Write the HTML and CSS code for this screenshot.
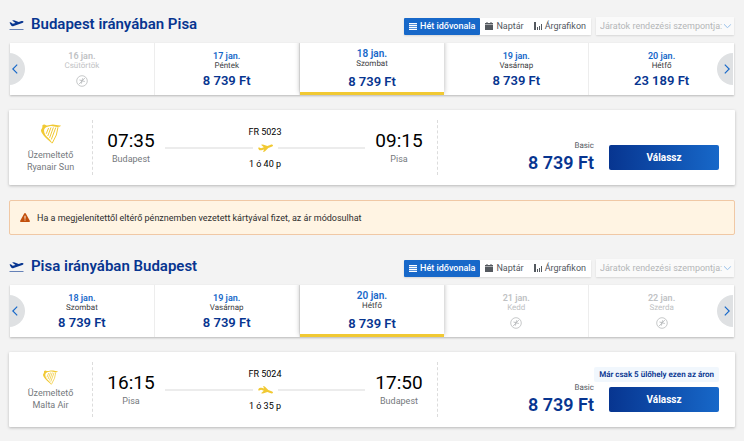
FILE: index.html
```html
<!DOCTYPE html>
<html lang="hu">
<head>
<meta charset="utf-8">
<meta name="viewport" content="width=device-width, initial-scale=1">
<title>Budapest – Pisa</title>
<link rel="stylesheet" href="styles.css">
</head>
<body>
<svg class="sprite" aria-hidden="true">
  <symbol id="depart" viewBox="0 0 14 12">
    <path d="M0 2.600 1.300 2.200 3.200 3.700 6 2.900 2.600.6 4.500.2 9.200 2 12 1.100C13.200.8 14 1.100 14 1.700c0 .5-.4.9-1.200 1.200L4.200 6C3 6.400 2.200 6.200 1.500 5.300Z"/>
    <rect y="9" width="14" height="1" opacity=".6"/>
  </symbol>
  <symbol id="plane" viewBox="0 0 15 8">
    <path d="M0 3.7 1.3 3.4 3.1 4.3 5.8 3.3 3 .8 4.9.4 9.4 2.1 12.2.9C13.6.3 14.7.5 15 1.2c.1.6-.4 1.1-1.4 1.5L10.3 4 6.8 7.5 4.9 8 6.2 5.4 3.5 6.2C2.2 6.6 1.3 6.2.8 5.4Z"/>
  </symbol>
  <symbol id="list" viewBox="0 0 8 8">
    <path d="M0 1h8v1H0zM0 3h8v1H0zM0 5h8v1H0zM0 7h8v1H0z"/>
    <path d="M0 2h8v1H0zM0 4h8v1H0zM0 6h8v1H0z" opacity=".3"/>
  </symbol>
  <symbol id="calendar" viewBox="0 0 8 8">
    <path d="M0 1h1.500V0h1v1h3V0h1v1H8v1.500H0zM0 3h8v5H0z"/>
  </symbol>
  <symbol id="chart" viewBox="0 0 8 8">
    <path d="M0 0h2v8H0zM3 5h1v3H3zM5 4h1v4H5zM7 2h1v6H7z"/>
  </symbol>
  <symbol id="chevron" viewBox="0 0 6 10">
    <path d="M5.200.6.800 5l4.400 4.400" fill="none" stroke="currentColor" stroke-width="1.200"/>
  </symbol>
  <symbol id="none" viewBox="0 0 12 12">
    <circle cx="6" cy="6" r="5.300" fill="none" stroke="currentColor" stroke-width=".8"/>
    <path d="M3 9.200 9 2.800M3.500 5l5.300 1.500M6.600 3.300 5.400 8.600" fill="none" stroke="currentColor" stroke-width=".9"/>
  </symbol>
  <symbol id="harp" viewBox="0 0 20 20">
    <path d="M1.300 1.500C2.300.2 4 .3 5 1.300c2 .7 4.300-.7 6.800-.7 2.700 0 4.600 1.200 8.200.9-.7 1.200-2 1.400-3.400 1.400-3.300 0-5.200-1.400-8-.6C5.800 3 3.800 3.300 3.200 5.600c-.5 2.400.8 5.200 3 7.500 2.200 2.200 4 3.500 5.300 6.900C8.500 16.600 5 14.700 2.800 11.700.3 8.500-.6 6.500.4 5.300 1.300 4.300 1.600 3 1.300 1.500Z"/>
    <path d="M17 3.200Q16.500 11 11.300 19M14.800 3.500 10.300 15.500M12.400 3.400 8.600 13.800M10 3.400 6.800 12M7.600 4 5.200 9.800" fill="none" stroke="currentColor" stroke-width="1"/>
  </symbol>
  <symbol id="warning" viewBox="0 0 10 9">
    <path d="M5 0c.4 0 .6.200.8.500l4 7.200c.4.700.1 1.300-.7 1.300H.9C.1 9-.2 8.400.2 7.700l4-7.200C4.400.2 4.600 0 5 0Z"/>
    <path d="M4.500 2.800h1v3h-1zM4.500 6.600h1v1h-1z" fill="#fff4e3"/>
  </symbol>
</svg>

<main class="page">
  <section class="journey">
    <header class="journey-head">
      <svg class="icon-depart"><use href="#depart"/></svg>
      <h2 class="title">Budapest irányában Pisa</h2>
      <div class="tabs">
        <button class="tab tab-active" type="button"><svg class="icon-tab"><use href="#list"/></svg>Hét idővonala</button>
        <button class="tab" type="button"><svg class="icon-tab"><use href="#calendar"/></svg>Naptár</button>
        <button class="tab" type="button"><svg class="icon-tab"><use href="#chart"/></svg>Árgrafikon</button>
      </div>
      <div class="sort">
        <select class="sort-select" aria-label="Járatok rendezési szempontja"><option>Járatok rendezési szempontja:</option></select>
        <svg class="sort-chevron"><use href="#chevron"/></svg>
      </div>
    </header>
    <div class="carousel">
      <button class="day day-off" type="button"><span class="date">16 jan.</span><span class="weekday">Csütörtök</span><svg class="icon-none"><use href="#none"/></svg></button>
      <button class="day" type="button"><span class="date">17 jan.</span><span class="weekday">Péntek</span><span class="amount">8 739 Ft</span></button>
      <button class="day day-selected" type="button"><span class="date">18 jan.</span><span class="weekday">Szombat</span><span class="amount">8 739 Ft</span></button>
      <button class="day" type="button"><span class="date">19 jan.</span><span class="weekday">Vasárnap</span><span class="amount">8 739 Ft</span></button>
      <button class="day" type="button"><span class="date">20 jan.</span><span class="weekday">Hétfő</span><span class="amount">23 189 Ft</span></button>
      <button class="nav nav-prev" type="button" aria-label="Előző"><svg class="icon-nav"><use href="#chevron"/></svg></button>
      <button class="nav nav-next" type="button" aria-label="Következő"><svg class="icon-nav"><use href="#chevron"/></svg></button>
    </div>
    <article class="card">
      <div class="operator">
        <svg class="harp"><use href="#harp"/></svg>
        <span>Üzemeltető</span><span>Ryanair Sun</span>
      </div>
      <div class="flight">
        <div class="stop"><span class="time">07:35</span><span class="city">Budapest</span></div>
        <div class="route">
          <span>FR 5023</span>
          <div class="track"><svg class="icon-plane"><use href="#plane"/></svg></div>
          <span>1 ó 40 p</span>
        </div>
        <div class="stop"><span class="time">09:15</span><span class="city">Pisa</span></div>
      </div>
      <div class="fare">
        <div class="price"><span class="fare-name">Basic</span><span class="fare-amount">8 739 Ft</span></div>
        <div class="action"><button class="select-button" type="button">Válassz</button></div>
      </div>
    </article>
  </section>

  <p class="notice"><svg class="icon-warning"><use href="#warning"/></svg>Ha a megjelenítettől eltérő pénznemben vezetett kártyával fizet, az ár módosulhat</p>

  <section class="journey">
    <header class="journey-head">
      <svg class="icon-depart"><use href="#depart"/></svg>
      <h2 class="title">Pisa irányában Budapest</h2>
      <div class="tabs">
        <button class="tab tab-active" type="button"><svg class="icon-tab"><use href="#list"/></svg>Hét idővonala</button>
        <button class="tab" type="button"><svg class="icon-tab"><use href="#calendar"/></svg>Naptár</button>
        <button class="tab" type="button"><svg class="icon-tab"><use href="#chart"/></svg>Árgrafikon</button>
      </div>
      <div class="sort">
        <select class="sort-select" aria-label="Járatok rendezési szempontja"><option>Járatok rendezési szempontja:</option></select>
        <svg class="sort-chevron"><use href="#chevron"/></svg>
      </div>
    </header>
    <div class="carousel">
      <button class="day" type="button"><span class="date">18 jan.</span><span class="weekday">Szombat</span><span class="amount">8 739 Ft</span></button>
      <button class="day" type="button"><span class="date">19 jan.</span><span class="weekday">Vasárnap</span><span class="amount">8 739 Ft</span></button>
      <button class="day day-selected" type="button"><span class="date">20 jan.</span><span class="weekday">Hétfő</span><span class="amount">8 739 Ft</span></button>
      <button class="day day-off" type="button"><span class="date">21 jan.</span><span class="weekday">Kedd</span><svg class="icon-none"><use href="#none"/></svg></button>
      <button class="day day-off" type="button"><span class="date">22 jan.</span><span class="weekday">Szerda</span><svg class="icon-none"><use href="#none"/></svg></button>
      <button class="nav nav-prev" type="button" aria-label="Előző"><svg class="icon-nav"><use href="#chevron"/></svg></button>
      <button class="nav nav-next" type="button" aria-label="Következő"><svg class="icon-nav"><use href="#chevron"/></svg></button>
    </div>
    <article class="card">
      <div class="operator">
        <svg class="harp harp-small"><use href="#harp"/></svg>
        <span>Üzemeltető</span><span>Malta Air</span>
      </div>
      <div class="flight">
        <div class="stop"><span class="time">16:15</span><span class="city">Pisa</span></div>
        <div class="route">
          <span>FR 5024</span>
          <div class="track"><svg class="icon-plane icon-plane-back"><use href="#plane"/></svg></div>
          <span>1 ó 35 p</span>
        </div>
        <div class="stop"><span class="time">17:50</span><span class="city">Budapest</span></div>
      </div>
      <div class="fare">
        <div class="price"><span class="fare-name">Basic</span><span class="fare-amount">8 739 Ft</span></div>
        <div class="action"><span class="seats">Már csak 5 ülőhely ezen az áron</span><button class="select-button" type="button">Válassz</button></div>
      </div>
    </article>
  </section>
</main>
</body>
</html>
```
FILE: styles.css
```css
* { box-sizing: border-box; }

body {
  margin: 0;
  background: #f3f3f3;
  font-family: Roboto, "Liberation Sans", sans-serif;
  font-size: 9px;
  line-height: 12px;
  color: #2e2e2e;
}

button, select { font: inherit; border: 0; margin: 0; padding: 0; }
button { cursor: pointer; }
svg { display: block; flex: none; fill: currentColor; }
.sprite { position: absolute; width: 0; height: 0; }

.page {
  padding: 14px 9px;
  display: flex;
  flex-direction: column;
  gap: 15px;
}

.journey + .notice + .journey { padding-top: 6px; }

.journey-head {
  display: flex;
  align-items: center;
  gap: 5px;
  height: 29px;
  padding-right: 1px;
  padding-bottom: 5px;
}

.icon-depart { width: 15px; height: 12px; color: #073590; }

.title {
  flex: 1;
  margin: 0 0 4px 2px;
  font-size: 15px;
  line-height: 20px;
  font-weight: 600;
  color: #073590;
}

.tabs {
  display: flex;
  height: 17px;
  border-radius: 1px;
  box-shadow: 0 1px 2px rgba(0, 0, 0, .12);
}

.tab {
  display: flex;
  align-items: center;
  gap: 3px;
  padding: 0 5px;
  background: #fff;
  color: #54595f;
}

.tab-active { background: #1768c9; color: #fff; font-weight: 500; border-radius: 1px; }
.icon-tab { width: 8px; height: 8px; }

.sort {
  position: relative;
  height: 18px;
  border-radius: 1px;
  box-shadow: 0 1px 2px rgba(0, 0, 0, .12);
}

.sort-select {
  appearance: none;
  height: 18px;
  width: 138px;
  padding-left: 4px;
  background: #fafafa;
  color: #b4b6b8;
}

.sort-chevron {
  position: absolute;
  right: 4px;
  top: 5px;
  width: 5px;
  height: 8px;
  color: #90bce9;
  transform: rotate(-90deg);
}

.carousel {
  position: relative;
  display: grid;
  grid-template-columns: repeat(5, 1fr);
  height: 52px;
  margin: 0 1px;
  background: #fff;
  box-shadow: 0 1px 2px rgba(0, 0, 0, .25);
}

.day {
  display: flex;
  flex-direction: column;
  align-items: center;
  padding-top: 8px;
  background: #fff;
  border-right: 1px solid #ededed;
}

.day:nth-child(5) { border-right: 0; }

.day-selected {
  position: relative;
  padding-top: 6px;
  border-right: 0;
  border-bottom: 3px solid #f1c933;
  box-shadow: 0 -2px 5px rgba(0, 0, 0, .3);
  clip-path: inset(0 -8px);
}

.date { font-weight: 600; line-height: 10px; color: #1768c9; }
.weekday { font-size: 8px; line-height: 10px; color: #3c4043; }
.weekday, .fare-name, .seats { text-rendering: geometricPrecision; }
.amount { font-size: 13px; line-height: 20px; font-weight: 600; color: #073590; }
.day-selected .date { font-size: 10px; line-height: 10px; }
.day-selected .amount { line-height: 16px; padding-top: 5px; }
.day-off .date, .day-off .weekday { color: #c0c2c4; }
.icon-none { width: 12px; height: 12px; margin-top: 4px; color: #b9bbbd; }

.nav {
  position: absolute;
  top: 10px;
  width: 16px;
  height: 32px;
  display: grid;
  place-items: center;
  background: #dfe1e3;
  color: #1768c9;
}

.nav-prev { left: -1px; border-radius: 0 16px 16px 0; padding-right: 5px; }
.nav-next { right: 1px; border-radius: 16px 0 0 16px; padding-left: 3px; }
.nav-next .icon-nav { transform: scaleX(-1); }
.icon-nav { width: 6px; height: 10px; }

.card {
  display: grid;
  grid-template-columns: 84px minmax(0, 1fr) 297px;
  align-items: center;
  height: 75px;
  margin-top: 15px;
  background: #fff;
  border-radius: 1px;
  box-shadow: 0 1px 3px rgba(0, 0, 0, .25);
}

.operator, .flight {
  height: 55px;
  border-right: 1px dashed #dcdcdc;
}

.operator {
  display: flex;
  flex-direction: column;
  align-items: center;
  justify-content: center;
  padding-top: 2px;
  line-height: 12px;
  color: #75797d;
}

.harp { width: 20px; height: 20px; margin-bottom: 5px; color: #f1c933; }
.harp-small { width: 15px; height: 15px; margin-bottom: 2px; }

.flight {
  display: grid;
  grid-template-columns: 48px 1fr 48px;
  align-items: center;
  gap: 10px;
  padding: 0 14px;
}

.stop { display: flex; flex-direction: column; align-items: center; padding-bottom: 2px; }
.time { font-size: 19px; line-height: 24px; color: #000; }
.city { color: #75797d; }

.route { text-align: center; color: #000; }

.track {
  display: flex;
  align-items: center;
  gap: 5px;
  height: 20px;
}

.track::before, .track::after { content: ""; flex: 1; height: 2px; background: #ececec; }
.icon-plane { width: 15px; height: 8px; color: #f1c933; }
.icon-plane-back { transform: scaleY(-1); }

.fare {
  display: flex;
  justify-content: flex-end;
  align-items: flex-end;
  gap: 15px;
  height: 75px;
  padding: 0 16px 15px 0;
}

.price { display: flex; flex-direction: column; align-items: flex-end; margin-bottom: -5px; }
.fare-name { font-size: 8px; line-height: 10px; color: #54595f; }
.fare-amount { font-size: 18px; line-height: 24px; font-weight: 600; color: #073590; }

.action { position: relative; }

.select-button {
  display: block;
  width: 110px;
  height: 25px;
  border-radius: 2px;
  background: linear-gradient(90deg, #073590, #1768c9);
  color: #fff;
  font-size: 10px;
  font-weight: 700;
}

.seats {
  position: absolute;
  right: 0;
  bottom: 30px;
  padding: 0 5px;
  border-radius: 2px;
  background: #f1f7fd;
  font-size: 8px;
  line-height: 15px;
  font-weight: 600;
  color: #073590;
  white-space: nowrap;
}

.notice {
  display: flex;
  align-items: center;
  gap: 7px;
  height: 35px;
  margin: 0;
  padding: 0 10px;
  border: 1px solid #f0c8a5;
  border-radius: 2px;
  background: #fff4e3;
}

.icon-warning { width: 10px; height: 9px; color: #c24f0c; }
```
